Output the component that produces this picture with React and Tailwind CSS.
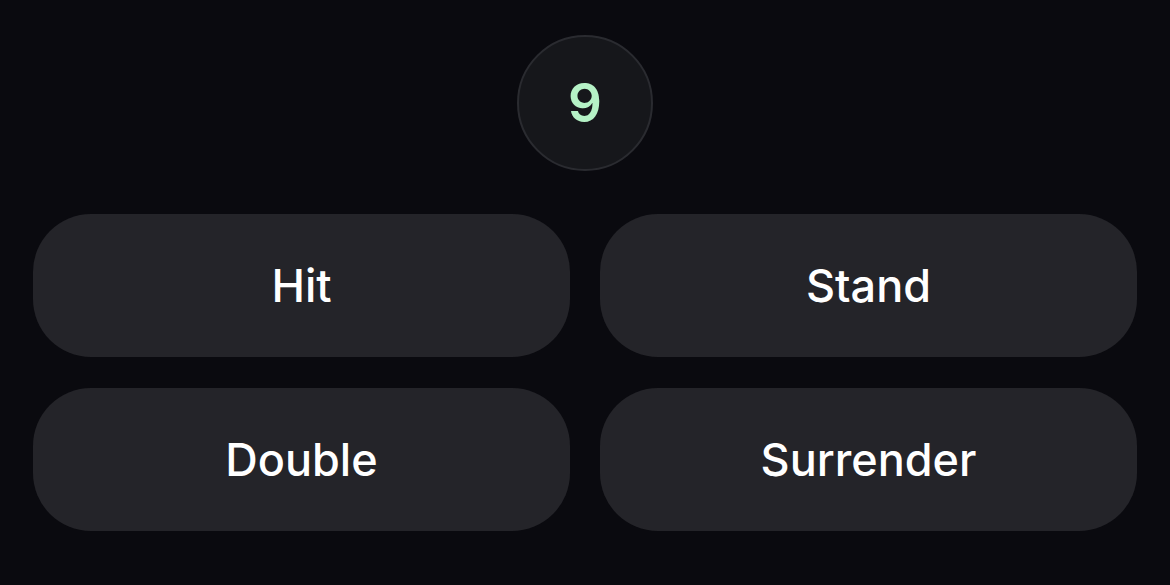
export default function App() {
    const actions = ['Hit', 'Stand', 'Double', 'Surrender'];

    return (
        <div className="h-[585px] w-[1170px] bg-[#0a0a0f] px-[33px] pt-[35px] font-['Inter',sans-serif] overflow-hidden">
            {/* Hand total */}
            <div className="flex justify-center">
                <div className="flex h-[136px] w-[136px] items-center justify-center rounded-full border-2 border-[#2a2b30] bg-[#16171b]">
                    <span className="text-[53px] font-semibold leading-none text-[#b5f2c6]">9</span>
                </div>
            </div>

            {/* Actions */}
            <div className="mt-[43px] grid grid-cols-2 gap-x-[30px] gap-y-[31px]">
                {actions.map(action => (
                    <button
                        key={action}
                        className="flex h-[143px] items-center justify-center rounded-[58px] bg-[#242429] text-[45px] font-medium text-white"
                    >
                        {action}
                    </button>
                ))}
            </div>
        </div>
    );
}
